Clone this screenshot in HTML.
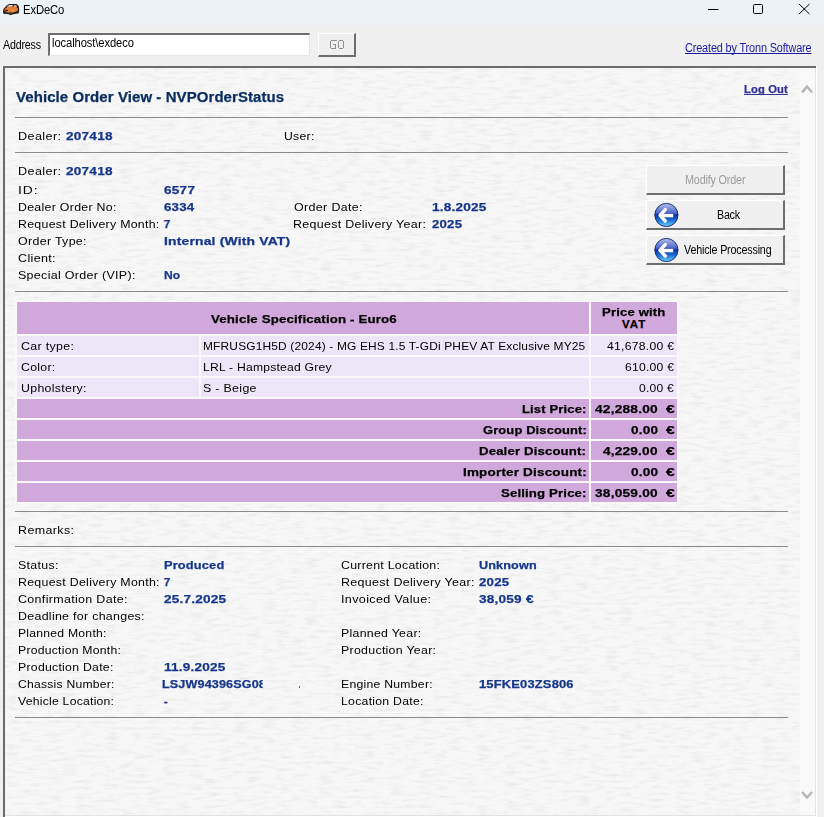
<!DOCTYPE html>
<html><head><meta charset="utf-8"><style>
html,body{margin:0;padding:0;}
body{width:824px;height:817px;overflow:hidden;position:relative;background:#f0f0f0;font-family:"Liberation Sans",sans-serif;}
.t{position:absolute;white-space:pre;transform-origin:0 0;}
.sb{-webkit-text-stroke:0.25px currentColor;}
.s{position:absolute;}
</style></head><body>
<div class="s" style="left:0px;top:0px;width:824px;height:25px;background:#edf2f7;"></div>
<div class="s" style="left:0px;top:25px;width:824px;height:41px;background:#f0f0f0;"></div>
<div class="s" style="left:0px;top:25px;width:824px;height:1px;background:#eef0f3;"></div>
<svg class="s" style="left:0px;top:0px" width="24" height="20" viewBox="0 0 24 20">
<path d="M3 11.5 L3.6 8.8 L6.8 5.6 L9 4 L16.5 3.9 L18.6 6 L19.2 9 L19 12.2 L17 13.6 L11 14.8 L4.2 13.4 Z" fill="#1e140e"/>
<path d="M4.2 10.8 L5 8.6 L8 6.6 L15.6 6.2 L17.8 8.2 L18 11 L11 13.2 L5 12 Z" fill="#e27d36"/>
<path d="M6.6 6.8 L9.2 4.9 L13.4 4.9 L11.6 6.8 Z" fill="#c9d2d4"/>
<path d="M13.6 5 L16.2 5 L17.2 7.2 L14.2 7 Z" fill="#d49a86"/>
<path d="M4.6 9.8 L8.2 9.9 L7.8 11 L4.6 11 Z" fill="#3a0c08"/>
<path d="M9 10.5 L15 9.5 L14 11.5 Z" fill="#e6b040" opacity=".6"/>
<circle cx="4.6" cy="12.4" r="1.5" fill="#2a2a2a"/><circle cx="10.4" cy="13.6" r="1.7" fill="#3a3a3a"/><circle cx="17.6" cy="12" r="1.5" fill="#2a2a2a"/>
</svg>
<svg class="s" style="left:700px;top:0" width="124" height="25" viewBox="0 0 124 25">
<line x1="8" y1="9.5" x2="18.5" y2="9.5" stroke="#000" stroke-width="1"/>
<rect x="53.5" y="4.5" width="9" height="9" rx="1" fill="none" stroke="#000" stroke-width="1"/>
<path d="M99 4 L109.5 14 M109.5 4 L99 14" stroke="#000" stroke-width="1"/>
</svg>
<div class="s" style="left:48px;top:33px;width:262px;height:23px;background:#fff;border-top:2px solid #6e6e6e;border-left:2px solid #6e6e6e;border-right:1px solid #e6e6e6;border-bottom:1px solid #e6e6e6;box-sizing:border-box;"></div>
<div class="s" style="left:318px;top:33px;width:38px;height:24px;background:#efefef;border-top:1px solid #fff;border-left:1px solid #fff;border-right:2px solid #6e6e6e;border-bottom:2px solid #6e6e6e;box-sizing:border-box;"></div>
<svg class="s" style="left:320px;top:35px" width="34" height="20" viewBox="320 35 34 20" shape-rendering="crispEdges">
<path d="M336 41 L336 40.5 L331 40.5 M330.5 41 L330.5 47.5 M331 48.5 L336 48.5 M335.5 48 L335.5 44.5 L333 44.5" fill="none" stroke="#8e8e8e" stroke-width="1"/>
<path d="M339 40.5 L343 40.5 M343.5 41 L343.5 48 M343 48.5 L339 48.5 M338.5 48 L338.5 41" fill="none" stroke="#8e8e8e" stroke-width="1"/>
</svg>
<div class="s" style="left:3px;top:66px;width:814px;height:751px;background:#f7f7f7;"></div>
<svg class="s" style="left:5px;top:68px" width="795" height="747"><filter id="tx" x="0" y="0" width="100%" height="100%"><feTurbulence type="fractalNoise" baseFrequency="0.07 0.32" numOctaves="3" seed="7"/><feColorMatrix type="matrix" values="0 0 0 0 0.8  0 0 0 0 0.8  0 0 0 0 0.8  0 0 0 -1.8 0.98"/></filter><rect width="795" height="747" filter="url(#tx)"/></svg>
<div class="s" style="left:3px;top:66px;width:813px;height:2px;background:#6b6b6b;"></div>
<div class="s" style="left:3px;top:66px;width:2px;height:751px;background:#6b6b6b;"></div>
<div class="s" style="left:800px;top:68px;width:15px;height:747px;background:#f9f9f9;"></div>
<div class="s" style="left:815px;top:68px;width:1px;height:749px;background:#e3e3e3;"></div>
<div class="s" style="left:816px;top:66px;width:1px;height:751px;background:#ffffff;"></div>
<div class="s" style="left:5px;top:815px;width:810px;height:1px;background:#e3e3e3;"></div>
<div class="s" style="left:5px;top:816px;width:812px;height:1px;background:#ffffff;"></div>
<svg class="s" style="left:800px;top:80px" width="16" height="20" viewBox="0 0 16 20">
<path d="M2 12.5 L7 6.5 L12 12.5" fill="none" stroke="#b4b4b4" stroke-width="2.4"/></svg>
<svg class="s" style="left:800px;top:785px" width="16" height="20" viewBox="0 0 16 20">
<path d="M2 7 L7 12.5 L12 7" fill="none" stroke="#b4b4b4" stroke-width="2.4"/></svg>
<div class="s" style="left:15px;top:117px;width:773px;height:1px;background:#8a8a8a;"></div>
<div class="s" style="left:15px;top:152px;width:773px;height:1px;background:#8a8a8a;"></div>
<div class="s" style="left:15px;top:291px;width:773px;height:1px;background:#8a8a8a;"></div>
<div class="s" style="left:15px;top:511px;width:773px;height:1px;background:#8a8a8a;"></div>
<div class="s" style="left:15px;top:546px;width:773px;height:1px;background:#8a8a8a;"></div>
<div class="s" style="left:15px;top:717px;width:773px;height:1px;background:#8a8a8a;"></div>
<div class="s" style="left:646px;top:165px;width:139px;height:30px;background:#f0f0f0;border-top:1px solid #fff;border-left:1px solid #fff;border-right:2px solid #6e6e6e;border-bottom:2px solid #6e6e6e;box-sizing:border-box;"></div>
<div class="s" style="left:646px;top:200px;width:139px;height:30px;background:#f0f0f0;border-top:1px solid #fff;border-left:1px solid #fff;border-right:2px solid #6e6e6e;border-bottom:2px solid #6e6e6e;box-sizing:border-box;"></div>
<div class="s" style="left:646px;top:235px;width:139px;height:30px;background:#f0f0f0;border-top:1px solid #fff;border-left:1px solid #fff;border-right:2px solid #6e6e6e;border-bottom:2px solid #6e6e6e;box-sizing:border-box;"></div>
<svg class="s" style="left:650px;top:200px" width="32" height="32" viewBox="0 0 32 32">
<defs><linearGradient id="g1" x1="0" y1="0" x2="0" y2="1"><stop offset="0" stop-color="#b4c0ec"/><stop offset=".42" stop-color="#4a64c8"/><stop offset=".5" stop-color="#0c2e9c"/><stop offset=".72" stop-color="#1b6fd4"/><stop offset="1" stop-color="#6fd0fa"/></linearGradient></defs>
<circle cx="16.4" cy="15" r="11.6" fill="url(#g1)" stroke="#0a2470" stroke-width="0.9"/>
<path d="M15.3 9.6 L10 15.3 L15.3 21" fill="none" stroke="#fff" stroke-width="3.4" stroke-linecap="round" stroke-linejoin="round"/>
<path d="M11.5 15.6 L23.2 15.6" fill="none" stroke="#fff" stroke-width="3.4" stroke-linecap="butt"/>
</svg>
<svg class="s" style="left:650px;top:235px" width="32" height="32" viewBox="0 0 32 32">
<defs><linearGradient id="g2" x1="0" y1="0" x2="0" y2="1"><stop offset="0" stop-color="#b4c0ec"/><stop offset=".42" stop-color="#4a64c8"/><stop offset=".5" stop-color="#0c2e9c"/><stop offset=".72" stop-color="#1b6fd4"/><stop offset="1" stop-color="#6fd0fa"/></linearGradient></defs>
<circle cx="16.4" cy="15" r="11.6" fill="url(#g2)" stroke="#0a2470" stroke-width="0.9"/>
<path d="M15.3 9.6 L10 15.3 L15.3 21" fill="none" stroke="#fff" stroke-width="3.4" stroke-linecap="round" stroke-linejoin="round"/>
<path d="M11.5 15.6 L23.2 15.6" fill="none" stroke="#fff" stroke-width="3.4" stroke-linecap="butt"/>
</svg>
<div class="s" style="left:15px;top:300px;width:664px;height:204px;background:#fbf8fb;"></div>
<div class="s" style="left:17px;top:302px;width:572px;height:32px;background:#d0a8dc;"></div>
<div class="s" style="left:591px;top:302px;width:86px;height:32px;background:#d0a8dc;"></div>
<div class="s" style="left:17px;top:336px;width:182px;height:19px;background:#ece6f8;"></div>
<div class="s" style="left:201px;top:336px;width:388px;height:19px;background:#ece6f8;"></div>
<div class="s" style="left:591px;top:336px;width:86px;height:19px;background:#ece6f8;"></div>
<div class="s" style="left:17px;top:357px;width:182px;height:19px;background:#ece6f8;"></div>
<div class="s" style="left:201px;top:357px;width:388px;height:19px;background:#ece6f8;"></div>
<div class="s" style="left:591px;top:357px;width:86px;height:19px;background:#ece6f8;"></div>
<div class="s" style="left:17px;top:378px;width:182px;height:19px;background:#ece6f8;"></div>
<div class="s" style="left:201px;top:378px;width:388px;height:19px;background:#ece6f8;"></div>
<div class="s" style="left:591px;top:378px;width:86px;height:19px;background:#ece6f8;"></div>
<div class="s" style="left:17px;top:399px;width:572px;height:19px;background:#d0a8dc;"></div>
<div class="s" style="left:591px;top:399px;width:86px;height:19px;background:#d0a8dc;"></div>
<div class="s" style="left:17px;top:420px;width:572px;height:19px;background:#d0a8dc;"></div>
<div class="s" style="left:591px;top:420px;width:86px;height:19px;background:#d0a8dc;"></div>
<div class="s" style="left:17px;top:441px;width:572px;height:19px;background:#d0a8dc;"></div>
<div class="s" style="left:591px;top:441px;width:86px;height:19px;background:#d0a8dc;"></div>
<div class="s" style="left:17px;top:462px;width:572px;height:19px;background:#d0a8dc;"></div>
<div class="s" style="left:591px;top:462px;width:86px;height:19px;background:#d0a8dc;"></div>
<div class="s" style="left:17px;top:483px;width:572px;height:19px;background:#d0a8dc;"></div>
<div class="s" style="left:591px;top:483px;width:86px;height:19px;background:#d0a8dc;"></div>
<div class="t" style="left:23.08px;top:4px;font-size:12px;line-height:12px;font-weight:normal;color:#000;letter-spacing:-0.140px;transform:scaleX(0.9400);">ExDeCo</div>
<div class="t" style="left:3.00px;top:39px;font-size:12px;line-height:12px;font-weight:normal;color:#000;letter-spacing:-0.224px;transform:scaleX(0.8909);">Address</div>
<div class="t" style="left:51.51px;top:37px;font-size:12px;line-height:12px;font-weight:normal;color:#000;letter-spacing:-0.106px;transform:scaleX(0.9324);">localhost\exdeco</div>
<div class="t" style="left:685.02px;top:42px;font-size:12px;line-height:12px;font-weight:normal;color:#1a1aa0;letter-spacing:-0.154px;transform:scaleX(0.9065);text-decoration:underline;text-decoration-skip-ink:none;">Created by Tronn Software</div>
<div class="t sb" style="left:15.52px;top:90px;font-size:14px;line-height:14px;font-weight:bold;color:#0a2c5e;letter-spacing:0.083px;transform:scaleX(1.0693);">Vehicle Order View - NVPOrderStatus</div>
<div class="t sb" style="left:744.02px;top:85px;font-size:10px;line-height:10px;font-weight:bold;color:#333399;letter-spacing:0.122px;transform:scaleX(1.1186);text-decoration:underline;text-decoration-skip-ink:none;">Log Out</div>
<div class="t" style="left:17.84px;top:131px;font-size:11.5px;line-height:11.5px;font-weight:normal;color:#000;letter-spacing:0.360px;transform:scaleX(1.0990);">Dealer:</div>
<div class="t sb" style="left:65.52px;top:131px;font-size:11.5px;line-height:11.5px;font-weight:bold;color:#163689;letter-spacing:0.204px;transform:scaleX(1.1798);">207418</div>
<div class="t" style="left:284.46px;top:131px;font-size:11.5px;line-height:11.5px;font-weight:normal;color:#000;letter-spacing:0.259px;transform:scaleX(1.0637);">User:</div>
<div class="t" style="left:17.84px;top:166px;font-size:11.5px;line-height:11.5px;font-weight:normal;color:#000;letter-spacing:0.360px;transform:scaleX(1.0990);">Dealer:</div>
<div class="t sb" style="left:65.52px;top:166px;font-size:11.5px;line-height:11.5px;font-weight:bold;color:#163689;letter-spacing:0.204px;transform:scaleX(1.1798);">207418</div>
<div class="t" style="left:17.84px;top:185px;font-size:11.5px;line-height:11.5px;font-weight:normal;color:#000;letter-spacing:0.742px;transform:scaleX(1.2068);">ID:</div>
<div class="t sb" style="left:163.76px;top:185px;font-size:11.5px;line-height:11.5px;font-weight:bold;color:#163689;letter-spacing:0.231px;transform:scaleX(1.1778);">6577</div>
<div class="t" style="left:17.84px;top:202px;font-size:11.5px;line-height:11.5px;font-weight:normal;color:#000;letter-spacing:0.266px;transform:scaleX(1.0749);">Dealer Order No:</div>
<div class="t sb" style="left:163.76px;top:202px;font-size:11.5px;line-height:11.5px;font-weight:bold;color:#163689;letter-spacing:0.205px;transform:scaleX(1.1550);">6334</div>
<div class="t" style="left:17.84px;top:219px;font-size:11.5px;line-height:11.5px;font-weight:normal;color:#000;letter-spacing:0.258px;transform:scaleX(1.0737);">Request Delivery Month:</div>
<div class="t sb" style="left:163.76px;top:219px;font-size:11.5px;line-height:11.5px;font-weight:bold;color:#163689;letter-spacing:0.000px;">7</div>
<div class="t" style="left:17.84px;top:236px;font-size:11.5px;line-height:11.5px;font-weight:normal;color:#000;letter-spacing:0.296px;transform:scaleX(1.0800);">Order Type:</div>
<div class="t sb" style="left:163.76px;top:236px;font-size:11.5px;line-height:11.5px;font-weight:bold;color:#163689;letter-spacing:0.167px;transform:scaleX(1.2050);">Internal (With VAT)</div>
<div class="t" style="left:17.84px;top:253px;font-size:11.5px;line-height:11.5px;font-weight:normal;color:#000;letter-spacing:0.303px;transform:scaleX(1.0930);">Client:</div>
<div class="t" style="left:17.84px;top:270px;font-size:11.5px;line-height:11.5px;font-weight:normal;color:#000;letter-spacing:0.280px;transform:scaleX(1.0848);">Special Order (VIP):</div>
<div class="t sb" style="left:163.76px;top:270px;font-size:11.5px;line-height:11.5px;font-weight:bold;color:#163689;letter-spacing:0.117px;transform:scaleX(1.0498);">No</div>
<div class="t" style="left:294.26px;top:202px;font-size:11.5px;line-height:11.5px;font-weight:normal;color:#000;letter-spacing:0.312px;transform:scaleX(1.0846);">Order Date:</div>
<div class="t sb" style="left:431.50px;top:202px;font-size:11.5px;line-height:11.5px;font-weight:bold;color:#163689;letter-spacing:0.176px;transform:scaleX(1.1836);">1.8.2025</div>
<div class="t" style="left:293.18px;top:219px;font-size:11.5px;line-height:11.5px;font-weight:normal;color:#000;letter-spacing:0.278px;transform:scaleX(1.0823);">Request Delivery Year:</div>
<div class="t sb" style="left:431.50px;top:219px;font-size:11.5px;line-height:11.5px;font-weight:bold;color:#163689;letter-spacing:0.195px;transform:scaleX(1.1465);">2025</div>
<div class="t" style="left:685.12px;top:174px;font-size:12px;line-height:12px;font-weight:normal;color:#9a9a9a;letter-spacing:-0.177px;transform:scaleX(0.8972);">Modify Order</div>
<div class="t" style="left:716.63px;top:209px;font-size:12px;line-height:12px;font-weight:normal;color:#000;letter-spacing:-0.263px;transform:scaleX(0.8917);">Back</div>
<div class="t" style="left:684.26px;top:244px;font-size:12px;line-height:12px;font-weight:normal;color:#000;letter-spacing:-0.182px;transform:scaleX(0.8910);">Vehicle Processing</div>
<div class="t sb" style="left:210.98px;top:314px;font-size:11.5px;line-height:11.5px;font-weight:bold;color:#000;letter-spacing:0.132px;transform:scaleX(1.1543);">Vehicle Specification - Euro6</div>
<div class="t sb" style="left:602.28px;top:307px;font-size:11.5px;line-height:11.5px;font-weight:bold;color:#000;letter-spacing:0.129px;transform:scaleX(1.1418);">Price with</div>
<div class="t sb" style="left:622.10px;top:319px;font-size:11.5px;line-height:11.5px;font-weight:bold;color:#000;letter-spacing:0.900px;">VAT</div>
<div class="t" style="left:20.52px;top:341px;font-size:11.5px;line-height:11.5px;font-weight:normal;color:#000;letter-spacing:0.289px;transform:scaleX(1.0817);">Car type:</div>
<div class="t" style="left:20.52px;top:362px;font-size:11.5px;line-height:11.5px;font-weight:normal;color:#000;letter-spacing:0.263px;transform:scaleX(1.0704);">Color:</div>
<div class="t" style="left:20.52px;top:383px;font-size:11.5px;line-height:11.5px;font-weight:normal;color:#000;letter-spacing:0.268px;transform:scaleX(1.0760);">Upholstery:</div>
<div class="t" style="left:203.22px;top:341px;font-size:11.5px;line-height:11.5px;font-weight:normal;color:#000;letter-spacing:0.153px;transform:scaleX(1.0385);">MFRUSG1H5D (2024) - MG EHS 1.5 T-GDi PHEV AT Exclusive MY25</div>
<div class="t" style="left:203.22px;top:362px;font-size:11.5px;line-height:11.5px;font-weight:normal;color:#000;letter-spacing:0.214px;transform:scaleX(1.0551);">LRL - Hampstead Grey</div>
<div class="t" style="left:203.22px;top:383px;font-size:11.5px;line-height:11.5px;font-weight:normal;color:#000;letter-spacing:0.286px;transform:scaleX(1.0789);">S - Beige</div>
<div class="t" style="left:606.50px;top:341px;font-size:11.5px;line-height:11.5px;font-weight:normal;color:#000;letter-spacing:0.235px;transform:scaleX(1.0614);">41,678.00 €</div>
<div class="t" style="left:624.50px;top:362px;font-size:11.5px;line-height:11.5px;font-weight:normal;color:#000;letter-spacing:0.229px;transform:scaleX(1.0565);">610.00 €</div>
<div class="t" style="left:638.98px;top:383px;font-size:11.5px;line-height:11.5px;font-weight:normal;color:#000;letter-spacing:0.210px;transform:scaleX(1.0517);">0.00 €</div>
<div class="t sb" style="left:521.56px;top:404px;font-size:11.5px;line-height:11.5px;font-weight:bold;color:#000;letter-spacing:0.113px;transform:scaleX(1.1351);">List Price:</div>
<div class="t sb" style="left:594.52px;top:404px;font-size:11.5px;line-height:11.5px;font-weight:bold;color:#000;letter-spacing:0.181px;transform:scaleX(1.1917);">42,288.00</div>
<div class="t sb" style="left:665.90px;top:404px;font-size:11.5px;line-height:11.5px;font-weight:bold;color:#000;letter-spacing:0.000px;transform:scaleX(1.3500);">€</div>
<div class="t sb" style="left:483.00px;top:425px;font-size:11.5px;line-height:11.5px;font-weight:bold;color:#000;letter-spacing:0.124px;transform:scaleX(1.1226);">Group Discount:</div>
<div class="t sb" style="left:630.50px;top:425px;font-size:11.5px;line-height:11.5px;font-weight:bold;color:#000;letter-spacing:0.192px;transform:scaleX(1.1746);">0.00</div>
<div class="t sb" style="left:665.90px;top:425px;font-size:11.5px;line-height:11.5px;font-weight:bold;color:#000;letter-spacing:0.000px;transform:scaleX(1.3500);">€</div>
<div class="t sb" style="left:479.00px;top:446px;font-size:11.5px;line-height:11.5px;font-weight:bold;color:#000;letter-spacing:0.134px;transform:scaleX(1.1447);">Dealer Discount:</div>
<div class="t sb" style="left:602.98px;top:446px;font-size:11.5px;line-height:11.5px;font-weight:bold;color:#000;letter-spacing:0.176px;transform:scaleX(1.1840);">4,229.00</div>
<div class="t sb" style="left:665.90px;top:446px;font-size:11.5px;line-height:11.5px;font-weight:bold;color:#000;letter-spacing:0.000px;transform:scaleX(1.3500);">€</div>
<div class="t sb" style="left:462.53px;top:467px;font-size:11.5px;line-height:11.5px;font-weight:bold;color:#000;letter-spacing:0.155px;transform:scaleX(1.1732);">Importer Discount:</div>
<div class="t sb" style="left:630.50px;top:467px;font-size:11.5px;line-height:11.5px;font-weight:bold;color:#000;letter-spacing:0.192px;transform:scaleX(1.1746);">0.00</div>
<div class="t sb" style="left:665.90px;top:467px;font-size:11.5px;line-height:11.5px;font-weight:bold;color:#000;letter-spacing:0.000px;transform:scaleX(1.3500);">€</div>
<div class="t sb" style="left:501.48px;top:488px;font-size:11.5px;line-height:11.5px;font-weight:bold;color:#000;letter-spacing:0.126px;transform:scaleX(1.1476);">Selling Price:</div>
<div class="t sb" style="left:594.52px;top:488px;font-size:11.5px;line-height:11.5px;font-weight:bold;color:#000;letter-spacing:0.181px;transform:scaleX(1.1917);">38,059.00</div>
<div class="t sb" style="left:665.90px;top:488px;font-size:11.5px;line-height:11.5px;font-weight:bold;color:#000;letter-spacing:0.000px;transform:scaleX(1.3500);">€</div>
<div class="t" style="left:17.84px;top:525px;font-size:11.5px;line-height:11.5px;font-weight:normal;color:#000;letter-spacing:0.353px;transform:scaleX(1.0838);">Remarks:</div>
<div class="t" style="left:17.84px;top:560px;font-size:11.5px;line-height:11.5px;font-weight:normal;color:#000;letter-spacing:0.276px;transform:scaleX(1.0765);">Status:</div>
<div class="t sb" style="left:163.76px;top:560px;font-size:11.5px;line-height:11.5px;font-weight:bold;color:#163689;letter-spacing:0.136px;transform:scaleX(1.1154);">Produced</div>
<div class="t" style="left:340.91px;top:560px;font-size:11.5px;line-height:11.5px;font-weight:normal;color:#000;letter-spacing:0.249px;transform:scaleX(1.0730);">Current Location:</div>
<div class="t sb" style="left:479.00px;top:560px;font-size:11.5px;line-height:11.5px;font-weight:bold;color:#163689;letter-spacing:0.132px;transform:scaleX(1.0967);">Unknown</div>
<div class="t" style="left:17.84px;top:577px;font-size:11.5px;line-height:11.5px;font-weight:normal;color:#000;letter-spacing:0.262px;transform:scaleX(1.0750);">Request Delivery Month:</div>
<div class="t sb" style="left:163.76px;top:577px;font-size:11.5px;line-height:11.5px;font-weight:bold;color:#163689;letter-spacing:0.000px;">7</div>
<div class="t" style="left:340.91px;top:577px;font-size:11.5px;line-height:11.5px;font-weight:normal;color:#000;letter-spacing:0.285px;transform:scaleX(1.0848);">Request Delivery Year:</div>
<div class="t sb" style="left:479.00px;top:577px;font-size:11.5px;line-height:11.5px;font-weight:bold;color:#163689;letter-spacing:0.204px;transform:scaleX(1.1543);">2025</div>
<div class="t" style="left:17.84px;top:594px;font-size:11.5px;line-height:11.5px;font-weight:normal;color:#000;letter-spacing:0.293px;transform:scaleX(1.0853);">Confirmation Date:</div>
<div class="t sb" style="left:163.76px;top:594px;font-size:11.5px;line-height:11.5px;font-weight:bold;color:#163689;letter-spacing:0.171px;transform:scaleX(1.1793);">25.7.2025</div>
<div class="t" style="left:340.91px;top:594px;font-size:11.5px;line-height:11.5px;font-weight:normal;color:#000;letter-spacing:0.314px;transform:scaleX(1.0949);">Invoiced Value:</div>
<div class="t sb" style="left:479.00px;top:594px;font-size:11.5px;line-height:11.5px;font-weight:bold;color:#163689;letter-spacing:0.176px;transform:scaleX(1.1840);">38,059 €</div>
<div class="t" style="left:17.84px;top:611px;font-size:11.5px;line-height:11.5px;font-weight:normal;color:#000;letter-spacing:0.269px;transform:scaleX(1.0791);">Deadline for changes:</div>
<div class="t" style="left:17.84px;top:628px;font-size:11.5px;line-height:11.5px;font-weight:normal;color:#000;letter-spacing:0.225px;transform:scaleX(1.0588);">Planned Month:</div>
<div class="t" style="left:340.91px;top:628px;font-size:11.5px;line-height:11.5px;font-weight:normal;color:#000;letter-spacing:0.264px;transform:scaleX(1.0727);">Planned Year:</div>
<div class="t" style="left:17.84px;top:645px;font-size:11.5px;line-height:11.5px;font-weight:normal;color:#000;letter-spacing:0.223px;transform:scaleX(1.0618);">Production Month:</div>
<div class="t" style="left:340.91px;top:645px;font-size:11.5px;line-height:11.5px;font-weight:normal;color:#000;letter-spacing:0.260px;transform:scaleX(1.0758);">Production Year:</div>
<div class="t" style="left:17.84px;top:662px;font-size:11.5px;line-height:11.5px;font-weight:normal;color:#000;letter-spacing:0.238px;transform:scaleX(1.0680);">Production Date:</div>
<div class="t sb" style="left:163.76px;top:662px;font-size:11.5px;line-height:11.5px;font-weight:bold;color:#163689;letter-spacing:0.171px;transform:scaleX(1.1787);">11.9.2025</div>
<div class="t" style="left:17.84px;top:679px;font-size:11.5px;line-height:11.5px;font-weight:normal;color:#000;letter-spacing:0.222px;transform:scaleX(1.0560);">Chassis Number:</div>
<div class="t" style="left:340.91px;top:679px;font-size:11.5px;line-height:11.5px;font-weight:normal;color:#000;letter-spacing:0.245px;transform:scaleX(1.0619);">Engine Number:</div>
<div class="t sb" style="left:479.00px;top:679px;font-size:11.5px;line-height:11.5px;font-weight:bold;color:#163689;letter-spacing:0.146px;transform:scaleX(1.1248);">15FKE03ZS806</div>
<div class="t" style="left:17.84px;top:696px;font-size:11.5px;line-height:11.5px;font-weight:normal;color:#000;letter-spacing:0.212px;transform:scaleX(1.0628);">Vehicle Location:</div>
<div class="t sb" style="left:163.76px;top:696px;font-size:11.5px;line-height:11.5px;font-weight:bold;color:#163689;letter-spacing:0.000px;">-</div>
<div class="t" style="left:340.91px;top:696px;font-size:11.5px;line-height:11.5px;font-weight:normal;color:#000;letter-spacing:0.237px;transform:scaleX(1.0677);">Location Date:</div>
<div class="t sb" style="left:162.31px;top:679px;width:91.97px;transform:scaleX(1.0949);overflow:hidden;font-size:11.5px;line-height:11.5px;font-weight:bold;color:#163689;letter-spacing:0.120px;">LSJW94396SG08</div><div class="s" style="left:299px;top:686px;width:1px;height:2px;background:#5a6a9a"></div>
</body></html>
